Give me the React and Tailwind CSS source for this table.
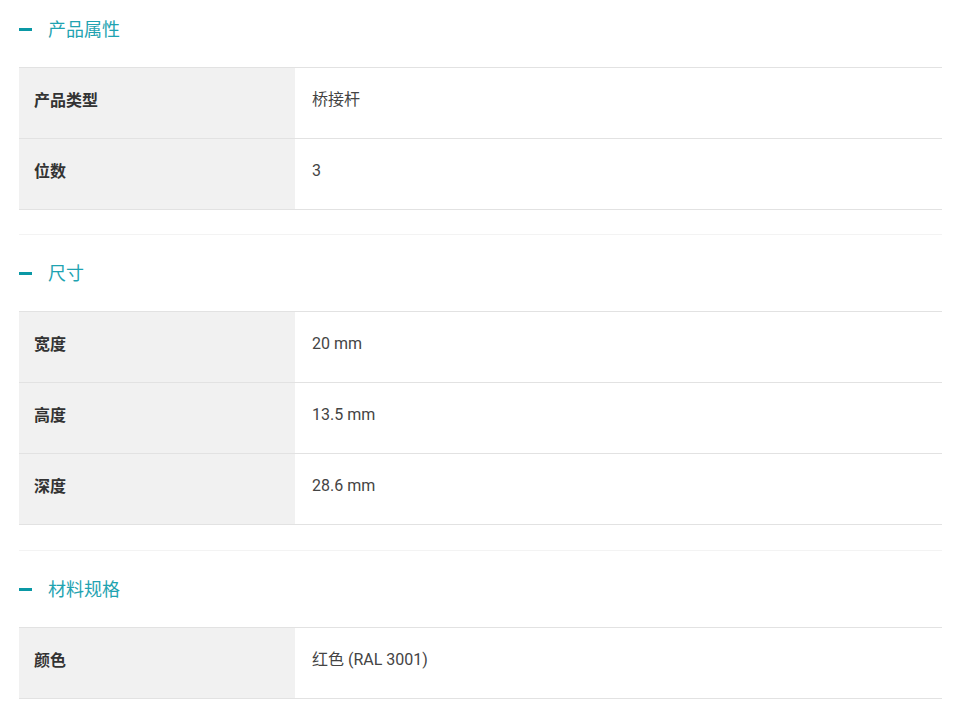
export default function App() {
  const sections = [
    { title: "产品属性", rows: [["产品类型", "桥接杆"], ["位数", "3"]] },
    { title: "尺寸", rows: [["宽度", "20 mm"], ["高度", "13.5 mm"], ["深度", "28.6 mm"]] },
    { title: "材料规格", rows: [["颜色", "红色 (RAL 3001)"]] },
  ];
  const font = { fontFamily: '"Open Sans", "Noto Sans CJK SC", sans-serif' };
  const valFont = { fontFamily: 'Roboto, "Noto Sans CJK SC", sans-serif' };
  const gap = ["", "border-t border-[#f3f3f3] mt-[24px]", "border-t border-[#f3f3f3] mt-[25px]"];
  return (
    <div className="w-[956px] h-[707px] overflow-hidden bg-white pl-[19px] pr-[14px]" style={font}>
      {sections.map((s, i) => (
        <div key={s.title} className={gap[i]}>
          <div className={`flex items-center h-6 ${i === 0 ? "pt-[17px] pb-[26px] box-content" : "py-[26px] box-content"}`}>
            <span className="block w-[13px] h-[3px] bg-[#0a98a5]"></span>
            <span className="ml-4 text-[18px] leading-6 text-[#1fa3b1]">{s.title}</span>
          </div>
          <div className="border-t border-[#e2e2e2]">
            {s.rows.map(([k, v]) => (
              <div key={k} className="flex h-[71px] border-b border-[#e2e2e2]">
                <div className="w-[276px] shrink-0 bg-[#f1f1f1] flex items-center pl-[15px] pb-[6px] text-[16px] font-bold text-[#333333]">{k}</div>
                <div className="flex-1 flex items-center pl-[17px] pb-[6px] text-[16px] text-[#444444]" style={valFont}>{v}</div>
              </div>
            ))}
          </div>
        </div>
      ))}
    </div>
  );
}
